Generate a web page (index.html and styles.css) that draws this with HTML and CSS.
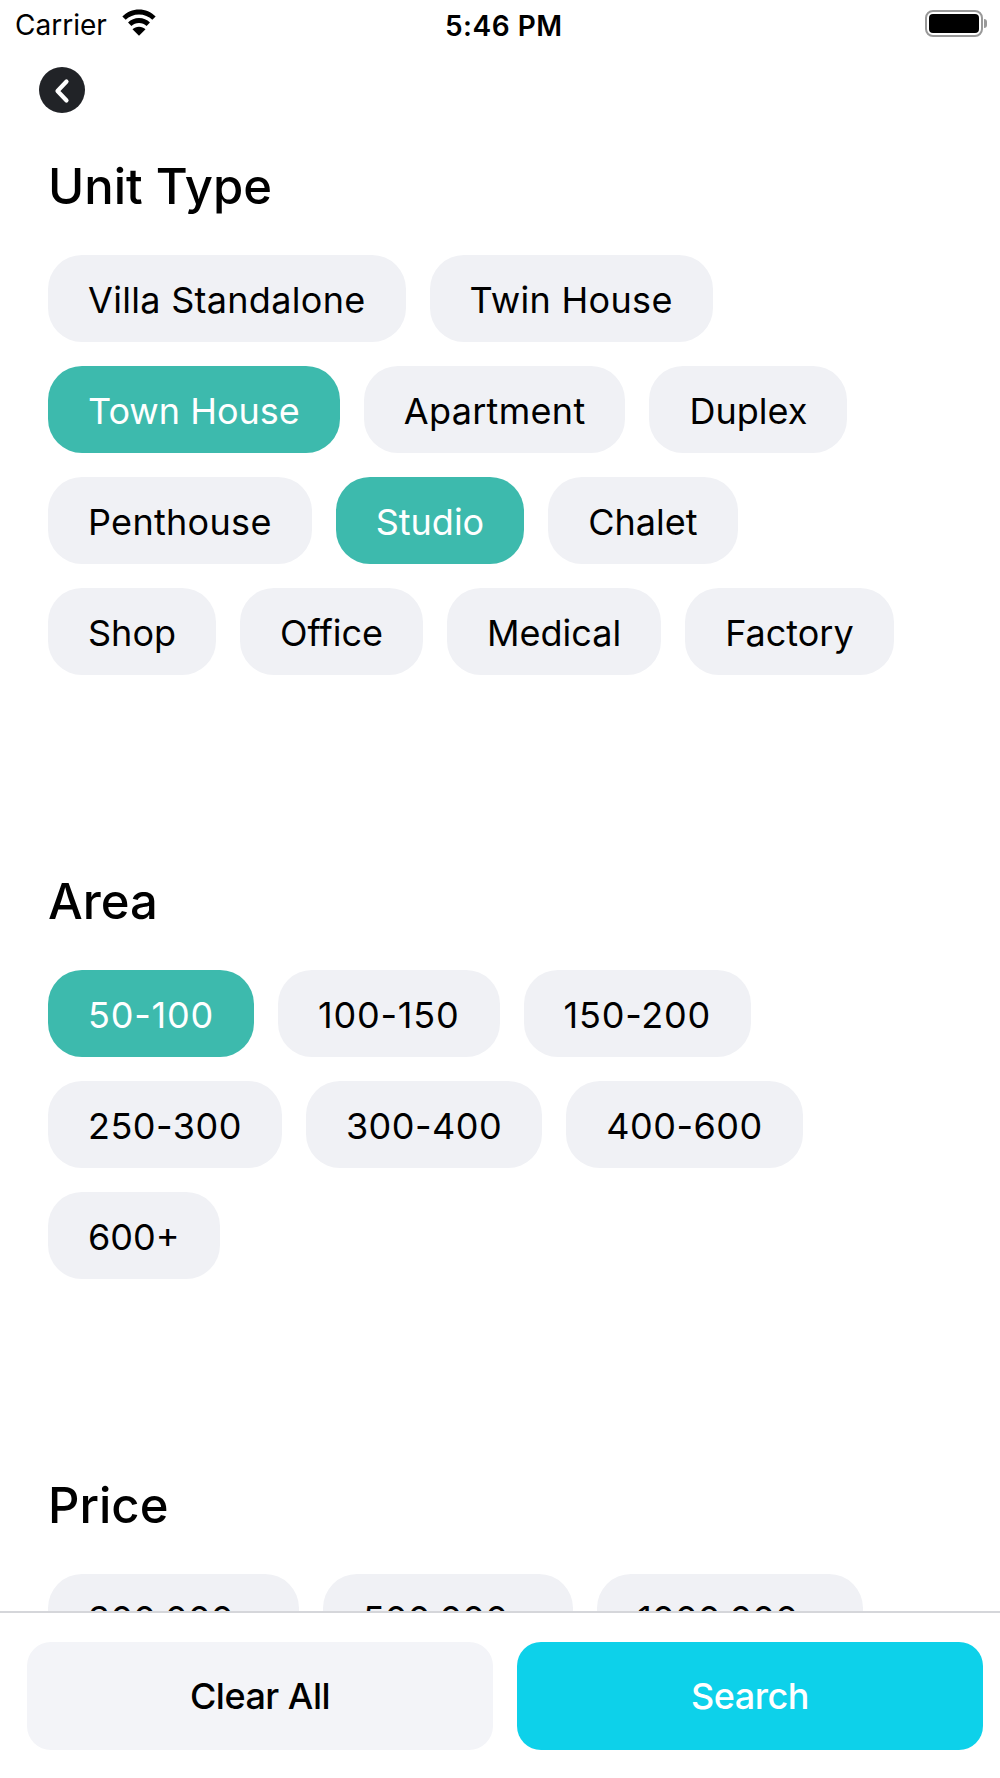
FILE: index.html
```html
<!DOCTYPE html>
<html lang="en">
<head>
<meta charset="utf-8">
<title>Filters</title>
<link rel="stylesheet" href="styles.css">
</head>
<body>
<div class="app">
  <header class="status">
    <div class="status-left">
      <span class="carrier">Carrier</span>
      <svg class="wifi" viewBox="0 0 34 25" width="34" height="25"><path d="M17 5c4.600 0 8.800 1.800 11.900 4.700l3-3.100C27.900 2.800 22.700.4 17 .4S6.100 2.800 2.100 6.600l3 3.100C8.200 6.800 12.400 5 17 5z"/><path d="M17 12.400c2.600 0 5 1 6.800 2.700l3-3.100c-2.600-2.500-6-4-9.800-4s-7.200 1.500-9.800 4l3 3.100c1.800-1.700 4.200-2.700 6.800-2.700z"/><path d="M17 24l5.800-6c-1.500-1.400-3.500-2.200-5.800-2.200s-4.300.8-5.800 2.200z"/></svg>
    </div>
    <span class="clock">5:46 PM</span>
    <div class="battery"><span class="battery-body"><span class="battery-fill"></span></span><span class="battery-cap"></span></div>
  </header>
  <main class="content">
    <button class="back" aria-label="Back"><svg viewBox="0 0 46 46" width="46" height="46"><path d="M27.500 14.500 L18.500 24 L27.500 33.500" fill="none" stroke="#fff" stroke-width="4.200" stroke-linecap="round" stroke-linejoin="round"/></svg></button>
    <section class="group group-unit">
      <h2 class="title">Unit Type</h2>
      <div class="chips">
        <span class="chip wide">Villa Standalone</span><span class="chip wide">Twin House</span>
        <span class="chip on">Town House</span><span class="chip wide">Apartment</span><span class="chip">Duplex</span>
        <span class="chip wide">Penthouse</span><span class="chip on">Studio</span><span class="chip">Chalet</span>
        <span class="chip">Shop</span><span class="chip">Office</span><span class="chip">Medical</span><span class="chip">Factory</span>
      </div>
    </section>
    <section class="group">
      <h2 class="title">Area</h2>
      <div class="chips">
        <span class="chip num on">50-100</span><span class="chip num">100-150</span><span class="chip num">150-200</span>
        <span class="chip tight">250-300</span><span class="chip tight">300-400</span><span class="chip tight">400-600</span>
        <span class="chip">600+</span>
      </div>
    </section>
    <section class="group">
      <h2 class="title">Price</h2>
      <div class="chips">
        <span class="chip price">300.000</span><span class="chip price">500.000</span><span class="chip price">1000.000</span>
      </div>
    </section>
  </main>
  <footer class="footer">
    <button class="action clear">Clear All</button>
    <button class="action search">Search</button>
  </footer>
</div>
</body>
</html>
```
FILE: styles.css
```css
* { box-sizing: border-box; }
html, body { margin: 0; padding: 0; background: #fff; }
body { font-family: Inter, "Liberation Sans", sans-serif; color: #000; }
.app { width: 1000px; height: 1778px; display: flex; flex-direction: column; overflow: hidden; }
.status { flex: none; height: 50px; padding: 0 13px 0 15px; display: flex; align-items: center; justify-content: space-between; position: relative; }
.status-left { display: flex; align-items: center; gap: 13px; }
.carrier { font-size: 28px; }
.wifi { display: block; margin-top: -5px; width: 38px; height: 28px; }
.clock { font-size: 28px; font-weight: 600; letter-spacing: .5px; position: absolute; left: 445px; top: 9px; }
.battery { display: flex; align-items: center; gap: 1px; margin-top: -4px; }
.battery-body { width: 58px; height: 27px; border: 2.500px solid #999; border-radius: 8px; padding: 2px; display: block; }
.battery-fill { display: block; height: 100%; background: #000; border-radius: 4px; }
.battery-cap { width: 3px; height: 9px; background: #999; border-radius: 0 3px 3px 0; }
.content { flex: 1; min-height: 0; overflow: hidden; padding: 17px 80px 0 48px; }
.back { display: block; width: 46px; height: 46px; margin: 0 0 0 -9px; padding: 0; border: 0; border-radius: 50%; background: #212327; }
.back svg { display: block; }
.group { margin-bottom: 198px; }
.group-unit { margin-top: 45px; }
.title { margin: 0 0 39px; font-size: 49px; line-height: 58px; font-weight: 500; }
.chips { display: flex; flex-wrap: wrap; gap: 24px; }
.chip { height: 87px; padding: 4px 40px 0; border-radius: 34px; background: #f0f1f5; font-size: 36px; line-height: 83px; white-space: nowrap; }
.chip.on { background: #3dbaad; color: #fff; }
.chip.wide { letter-spacing: .3px; }
.chip.num { letter-spacing: .8px; }
.chip.tight { letter-spacing: .5px; }
.chip.price { padding-right: 65px; letter-spacing: .2px; }
.footer { flex: none; height: 167px; border-top: 2px solid #d5d6da; background: #fff; padding: 29px 17px 27px 27px; display: flex; gap: 24px; }
.action { flex: 1; height: 108px; border: 0; border-radius: 24px; font-family: inherit; font-size: 36px; font-weight: 500; letter-spacing: -.5px; }
.clear { background: #f3f4f8; color: #000; }
.search { background: #0dd1ea; color: #fff; }
```
